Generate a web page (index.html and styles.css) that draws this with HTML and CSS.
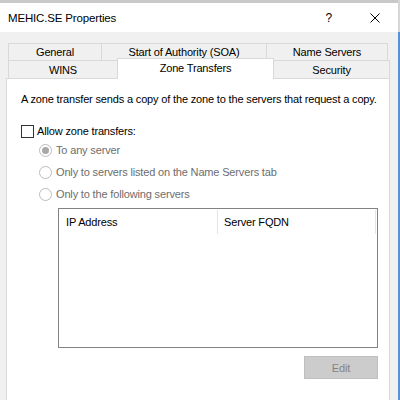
FILE: index.html
```html
<!DOCTYPE html>
<html>
<head>
<meta charset="utf-8">
<title>MEHIC.SE Properties</title>
<link rel="stylesheet" href="styles.css">
</head>
<body>
<div class="window">
  <div class="topstrip"></div>
  <div class="titlebar">
    <span class="title">MEHIC.SE Properties</span>
    <span class="help">?</span>
    <span class="close"><svg width="10" height="10" viewBox="0 0 10 10"><path d="M0.5 0.5L9.5 9.5M9.5 0.5L0.5 9.5" stroke="#000" stroke-width="1"/></svg></span>
  </div>
  <div class="main">
    <div class="tabrow row1">
      <div class="tab t-general">General</div>
      <div class="tab t-soa">Start of Authority (SOA)</div>
      <div class="tab t-ns">Name Servers</div>
    </div>
    <div class="tabrow row2">
      <div class="tab t-wins">WINS</div>
      <div class="tab t-zone selected">Zone Transfers</div>
      <div class="tab t-sec">Security</div>
    </div>
    <div class="panel">
      <div class="desc">A zone transfer sends a copy of the zone to the servers that request a copy.</div>
      <div class="check-row">
        <span class="checkbox"></span>
        <span class="label">Allow zone transfers:</span>
      </div>
      <div class="radio-row disabled">
        <span class="radio on"><span class="dot"></span></span>
        <span class="label">To any server</span>
      </div>
      <div class="radio-row disabled">
        <span class="radio"></span>
        <span class="label">Only to servers listed on the Name Servers tab</span>
      </div>
      <div class="radio-row disabled">
        <span class="radio"></span>
        <span class="label">Only to the following servers</span>
      </div>
      <div class="listbox">
        <div class="list-header">
          <div class="col col-ip">IP Address</div>
          <div class="col col-fqdn">Server FQDN</div>
        </div>
      </div>
      <div class="btn-row">
        <div class="btn disabled-btn">Edit</div>
      </div>
    </div>
  </div>
</div>
</body>
</html>
```

FILE: styles.css
```css
html, body {
  margin: 0;
  padding: 0;
}
body {
  width: 400px;
  height: 400px;
  overflow: hidden;
  background: linear-gradient(#d6d6d6 0, #d6d6d6 32px, #5a90d6 32px);
  font-family: "Liberation Sans", Arial, sans-serif;
  font-size: 11px;
  letter-spacing: -0.16px;
  color: #000;
}
.window {
  width: 398px;
  height: 400px;
  background: #f0f0f0;
  display: flex;
  flex-direction: column;
}
.topstrip {
  height: 3px;
  background: #c9c9c9;
  flex: none;
}
.titlebar {
  height: 29px;
  background: #fff;
  display: flex;
  align-items: center;
  padding-left: 8px;
  padding-right: 18px;
  flex: none;
}
.title {
  font-size: 11.5px;
  flex: 1;
}
.help {
  font-size: 12px;
  margin-right: 38px;
}
.close {
  display: flex;
  width: 10px;
  height: 10px;
}
.main {
  flex: 1;
  display: flex;
  flex-direction: column;
  padding-left: 6px;
  padding-top: 11px;
}
.tabrow {
  display: flex;
  padding-left: 2px;
}
.row1 { height: 17px; }
.row2 { height: 18px; }
.tab {
  box-sizing: border-box;
  border: 1px solid #d9d9d9;
  border-bottom: none;
  background: #f0f0f0;
  display: flex;
  align-items: center;
  justify-content: center;
  margin-left: -1px;
  white-space: nowrap;
}
.tab:first-child { margin-left: 0; }
.row1 .tab { height: 17px; }
.row2 .tab { height: 18px; }
.t-general { width: 94px; }
.t-soa { width: 166px; }
.t-ns { width: 122px; }
.t-wins { width: 110px; }
.t-zone { width: 157px; }
.t-sec { width: 117px; }
.row2 .tab.selected {
  height: 21px;
  margin-top: -2px;
  margin-bottom: -1px;
  background: #fff;
  position: relative;
  z-index: 2;
  padding-bottom: 3px;
}
.panel {
  width: 384px;
  box-sizing: border-box;
  flex: 1;
  background: #fff;
  border: 1px solid #d9d9d9;
  border-bottom: none;
  padding: 12px 11px 0 14px;
  display: flex;
  flex-direction: column;
}
.desc {
  line-height: 16px;
  height: 16px;
  white-space: nowrap;
}
.check-row {
  margin-top: 16px;
  height: 16px;
  display: flex;
  align-items: center;
}
.checkbox {
  width: 13px;
  height: 13px;
  box-sizing: border-box;
  border: 1px solid #333;
  background: #fff;
  margin-right: 3px;
}
.radio-row {
  height: 22px;
  display: flex;
  align-items: center;
  padding-left: 18px;
}
.disabled .label { color: #6d6d6d; }
.radio {
  width: 13px;
  height: 13px;
  box-sizing: border-box;
  border: 1px solid #bcbcbc;
  border-radius: 50%;
  background: #fff;
  margin-right: 4px;
  display: flex;
  align-items: center;
  justify-content: center;
}
.radio.on .dot {
  width: 7px;
  height: 7px;
  border-radius: 50%;
  background: #a8a8a8;
}
.listbox {
  margin-top: 3px;
  margin-left: 37px;
  height: 140px;
  box-sizing: border-box;
  border: 1px solid #828282;
  background: #fff;
  padding: 1px 1px 0 0;
}
.list-header {
  display: flex;
  height: 24px;
}
.col {
  box-sizing: border-box;
  display: flex;
  align-items: center;
  border-right: 1px solid #e5e5e5;
  height: 24px;
}
.col-ip {
  width: 159px;
  padding-left: 7px;
}
.col-fqdn {
  width: 158px;
  padding-left: 6px;
}
.btn-row {
  display: flex;
  justify-content: flex-end;
  margin-top: 8px;
}
.btn {
  width: 74px;
  height: 23px;
  box-sizing: border-box;
  display: flex;
  align-items: center;
  justify-content: center;
}
.disabled-btn {
  background: #cccccc;
  border: 1px solid #bfbfbf;
  color: #838383;
}
```
